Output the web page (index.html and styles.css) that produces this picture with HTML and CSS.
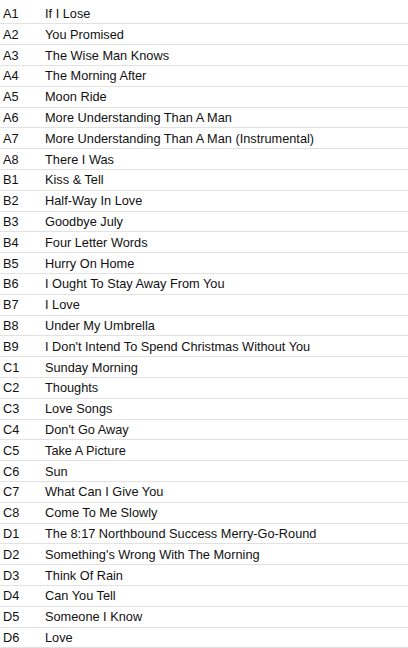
FILE: index.html
```html
<!DOCTYPE html>
<html lang="en">
<head>
    <meta charset="UTF-8">
    <meta name="viewport" content="width=device-width, initial-scale=1.0">
    <title>Tracklist</title>
    <link rel="stylesheet" href="styles.css">
</head>
<body>
    <table class="tracklist">
        <tr><td class="pos">A1</td><td>If I Lose</td></tr>
        <tr><td class="pos">A2</td><td>You Promised</td></tr>
        <tr><td class="pos">A3</td><td>The Wise Man Knows</td></tr>
        <tr><td class="pos">A4</td><td>The Morning After</td></tr>
        <tr><td class="pos">A5</td><td>Moon Ride</td></tr>
        <tr><td class="pos">A6</td><td>More Understanding Than A Man</td></tr>
        <tr><td class="pos">A7</td><td>More Understanding Than A Man (Instrumental)</td></tr>
        <tr><td class="pos">A8</td><td>There I Was</td></tr>
        <tr><td class="pos">B1</td><td>Kiss &amp; Tell</td></tr>
        <tr><td class="pos">B2</td><td>Half-Way In Love</td></tr>
        <tr><td class="pos">B3</td><td>Goodbye July</td></tr>
        <tr><td class="pos">B4</td><td>Four Letter Words</td></tr>
        <tr><td class="pos">B5</td><td>Hurry On Home</td></tr>
        <tr><td class="pos">B6</td><td>I Ought To Stay Away From You</td></tr>
        <tr><td class="pos">B7</td><td>I Love</td></tr>
        <tr><td class="pos">B8</td><td>Under My Umbrella</td></tr>
        <tr><td class="pos">B9</td><td>I Don't Intend To Spend Christmas Without You</td></tr>
        <tr><td class="pos">C1</td><td>Sunday Morning</td></tr>
        <tr><td class="pos">C2</td><td>Thoughts</td></tr>
        <tr><td class="pos">C3</td><td>Love Songs</td></tr>
        <tr><td class="pos">C4</td><td>Don't Go Away</td></tr>
        <tr><td class="pos">C5</td><td>Take A Picture</td></tr>
        <tr><td class="pos">C6</td><td>Sun</td></tr>
        <tr><td class="pos">C7</td><td>What Can I Give You</td></tr>
        <tr><td class="pos">C8</td><td>Come To Me Slowly</td></tr>
        <tr><td class="pos">D1</td><td>The 8:17 Northbound Success Merry-Go-Round</td></tr>
        <tr><td class="pos">D2</td><td>Something's Wrong With The Morning</td></tr>
        <tr><td class="pos">D3</td><td>Think Of Rain</td></tr>
        <tr><td class="pos">D4</td><td>Can You Tell</td></tr>
        <tr><td class="pos">D5</td><td>Someone I Know</td></tr>
        <tr><td class="pos">D6</td><td>Love</td></tr>
    </table>
</body>
</html>
```

FILE: styles.css
```css
body {
    margin: 0;
    padding: 3.2px 0 0;
    font-family: "Liberation Sans", Arial, sans-serif;
    font-size: 12.75px;
    color: #111111;
    background: #ffffff;
}
.tracklist {
    width: 100%;
    border-collapse: collapse;
}
.tracklist tr {
    height: 20.8px;
    border-bottom: 1px solid #e2e2e2;
}
.tracklist td {
    padding: 0;
    vertical-align: middle;
    white-space: nowrap;
}
.tracklist .pos {
    width: 42px;
    padding-left: 3px;
}
```
